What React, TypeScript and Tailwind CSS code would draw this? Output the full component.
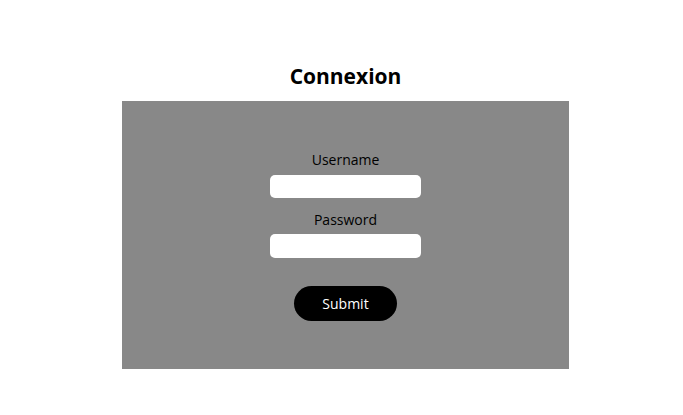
export default function App() {
  return (
    <div className="min-h-screen bg-white flex flex-col items-center pt-[62px] pl-[8px] font-['Open_Sans',sans-serif] text-black">
      <h1 className="text-[21px] leading-[28px] font-bold mb-[11px]">Connexion</h1>
      <form
        className="w-[447px] h-[268px] bg-[#888888] flex flex-col items-center pt-[49px]"
        onSubmit={(e) => e.preventDefault()}
      >
        <label htmlFor="username" className="text-[14px] leading-[20px]">
          Username
        </label>
        <input
          id="username"
          type="text"
          className="mt-[5px] w-[151px] h-[23px] bg-white rounded-[5px] outline-none border-0"
        />
        <label htmlFor="password" className="mt-[12px] text-[14px] leading-[20px]">
          Password
        </label>
        <input
          id="password"
          type="password"
          className="mt-[4px] w-[151px] h-[24px] bg-white rounded-[5px] outline-none border-0"
        />
        <button
          type="submit"
          className="mt-[28px] w-[103px] h-[35px] rounded-full bg-black text-white text-[14px]"
        >
          Submit
        </button>
      </form>
    </div>
  );
}
